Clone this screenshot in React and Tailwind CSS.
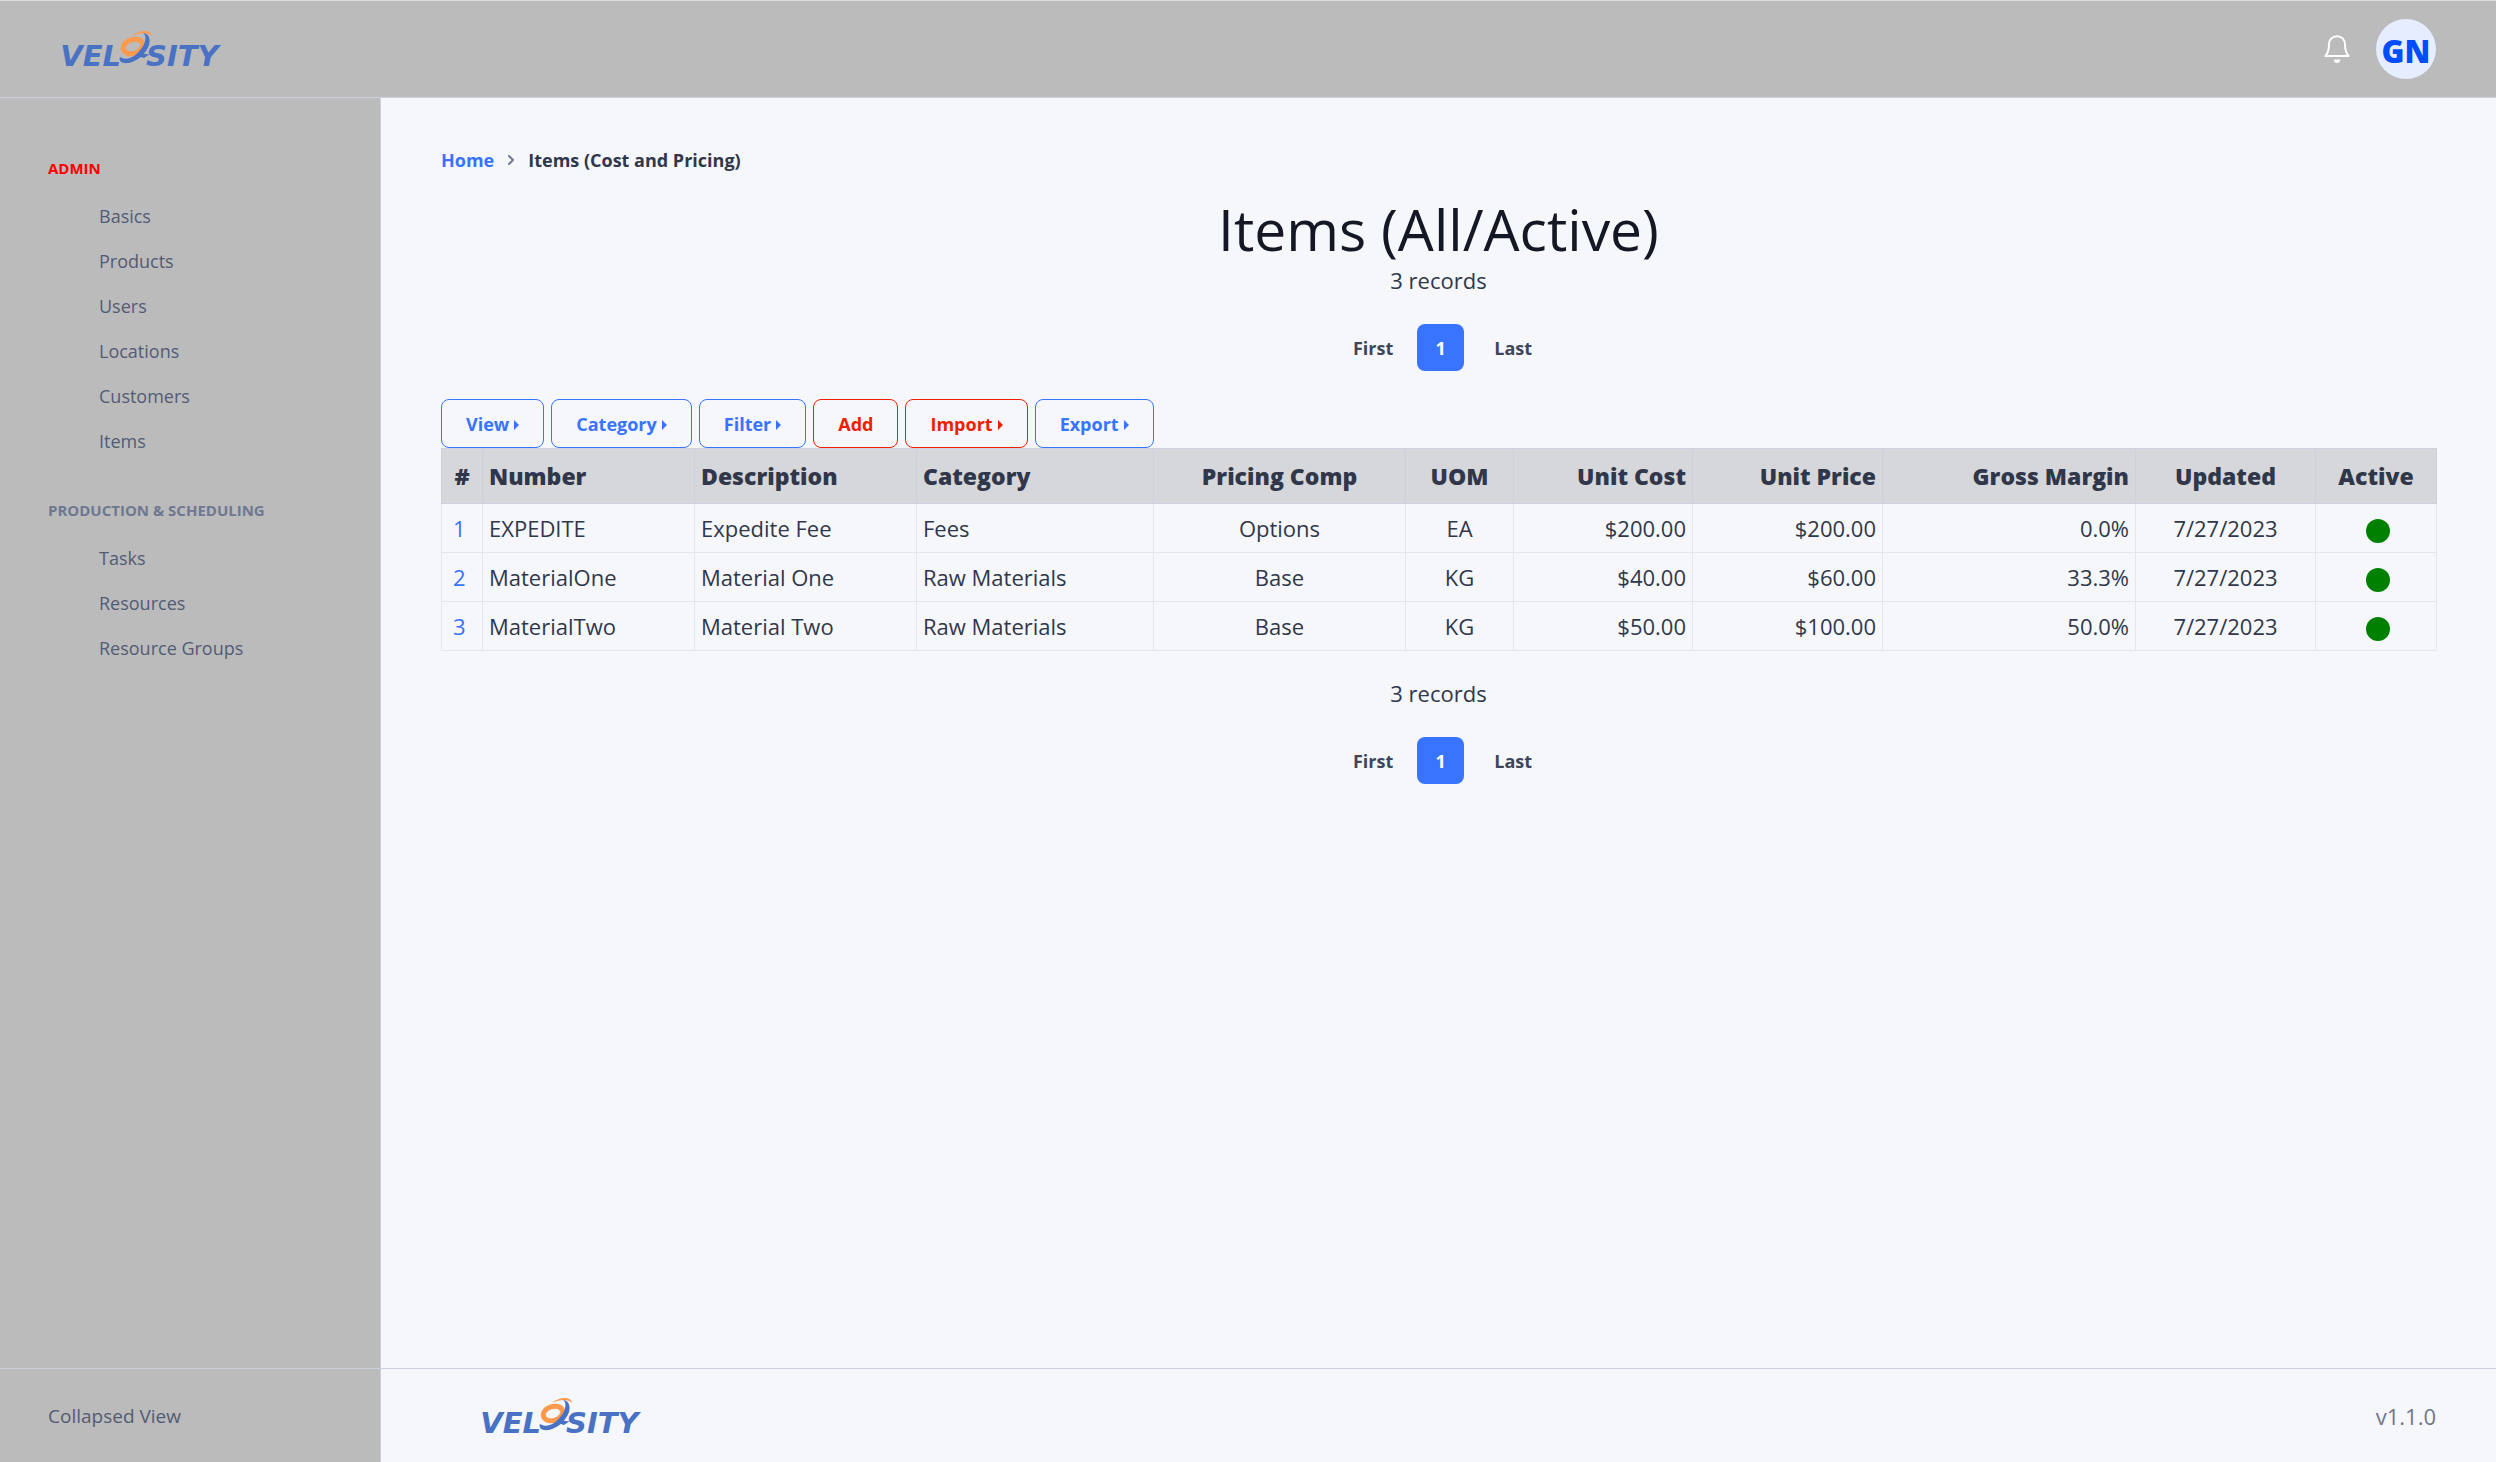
import { ChevronRight } from "lucide-react";

function Logo({ className }) {
  return (
    <svg viewBox="0 -6 188 50" className={className} role="img" aria-label="Velosity">
      <g fill="#4a72c4" fontFamily="DejaVu Sans, sans-serif" fontSize="29" fontWeight="700" fontStyle="italic">
        <text x="73" y="36" textAnchor="end">VEL</text>
        <text x="98" y="36">SITY</text>
      </g>
      <ellipse cx="85" cy="16.500" rx="10" ry="7" transform="rotate(-18 85 16.500)" fill="none" stroke="#ff9a4d" strokeWidth="5" />
      <path d="M95 3C99 5 98 13 93 19C86 28 79 31 72 27C70 32 76 35 84 32C92 29 98 23 101 15C103 8 100 3 95 3Z" fill="#4a72c4" />
      <path d="M93 22Q97 25 102 24L96 28L90 26Z" fill="#4a72c4" />
      <path d="M84 6C91 0 103 -1 104 6C100 2 92 2 84 6Z" fill="#ff9a4d" />
    </svg>
  );
}

function BellIcon({ className }) {
  return (
    <svg viewBox="0 0 26 29" className={className} fill="none" stroke="currentColor" strokeWidth="2" strokeLinecap="round" strokeLinejoin="round">
      <path d="M13 1.200C8 1.200 5 5 5 9.500C5 15 4 18 1.500 21H24.500C22 18 21 15 21 9.500C21 5 18 1.200 13 1.200Z" />
      <path d="M10.500 25.200Q11 27.200 13 27.200T15.500 25.200Z" fill="currentColor" strokeWidth="1.500" />
    </svg>
  );
}

const sections = [
  { title: "ADMIN", color: "text-[#ff0000]", items: ["Basics", "Products", "Users", "Locations", "Customers", "Items"] },
  { title: "PRODUCTION & SCHEDULING", color: "text-[#6e7891]", items: ["Tasks", "Resources", "Resource Groups"] },
];

const actions = [
  ["View", true, false],
  ["Category", true, false],
  ["Filter", true, false],
  ["Add", false, true],
  ["Import", true, true],
  ["Export", true, false],
];

const columns = [
  ["#", "w-[41px]", "text-center"],
  ["Number", "w-[212px]", "text-left"],
  ["Description", "w-[222px]", "text-left"],
  ["Category", "w-[237px]", "text-left"],
  ["Pricing Comp", "w-[252px]", "text-center"],
  ["UOM", "w-[108px]", "text-center"],
  ["Unit Cost", "w-[179px]", "text-right"],
  ["Unit Price", "w-[190px]", "text-right"],
  ["Gross Margin", "w-[253px]", "text-right"],
  ["Updated", "w-[180px]", "text-center"],
  ["Active", "w-[121px]", "text-center"],
];

const rows = [
  ["1", "EXPEDITE", "Expedite Fee", "Fees", "Options", "EA", "$200.00", "$200.00", "0.0%", "7/27/2023"],
  ["2", "MaterialOne", "Material One", "Raw Materials", "Base", "KG", "$40.00", "$60.00", "33.3%", "7/27/2023"],
  ["3", "MaterialTwo", "Material Two", "Raw Materials", "Base", "KG", "$50.00", "$100.00", "50.0%", "7/27/2023"],
];

function Pager() {
  return (
    <div className="flex flex-col items-center">
      <p className="text-[22px] leading-8">3 records</p>
      <nav aria-label="Pagination" className="mt-7 flex items-center text-lg font-bold text-[#3e465b]">
        <button className="px-6">First</button>
        <button className="size-[47px] rounded-lg bg-[#3874ff] text-white" aria-current="page">1</button>
        <button className="pr-4 pl-[30px]">Last</button>
      </nav>
    </div>
  );
}

export default function App() {
  return (
    <div className="flex min-h-screen flex-col bg-[#f5f7fb] font-['Open_Sans',sans-serif] text-[#31374a]">
      <header className="flex h-[98px] items-center justify-between border-t border-b border-t-[#dcdcdc] border-b-[#cbd0dd] bg-[#bbbbbb] pr-[60px] pl-12">
        <a href="#" className="block"><Logo className="w-[188px]" /></a>
        <div className="flex items-center gap-[26px]">
          <button aria-label="Notifications"><BellIcon className="h-[29px] w-[26px] text-white" /></button>
          <button className="size-[60px] rounded-full bg-[#e5edff] pt-1 text-[31px] font-extrabold text-[#004dff]">GN</button>
        </div>
      </header>
      <div className="flex flex-1">
        <aside className="flex w-[381px] shrink-0 flex-col border-r border-[#cbd0dd] bg-[#bbbbbb]">
          <nav className="flex-1 pt-14 pl-12">
            {sections.map((s) => (
              <section key={s.title} className="mb-8">
                <h2 className={`text-[15px] leading-7 font-bold ${s.color}`}>{s.title}</h2>
                <ul className="mt-3 pl-[51px] text-lg font-medium text-[#525b75]">
                  {s.items.map((i) => (
                    <li key={i} className="h-[45px] leading-[45px]"><a href="#">{i}</a></li>
                  ))}
                </ul>
              </section>
            ))}
          </nav>
          <button className="h-[94px] border-t border-[#cbd0dd] pt-0.5 pl-12 text-left text-[19px] font-medium text-[#525b75]">Collapsed View</button>
        </aside>
        <div className="flex min-w-0 flex-1 flex-col">
          <main className="flex-1 px-[60px] pt-12">
            <nav aria-label="Breadcrumb" className="flex h-7 items-center text-lg font-bold">
              <a href="#" className="text-[#3874ff]">Home</a>
              <ChevronRight className="mx-[9px] size-4 text-[#6e7891]" strokeWidth={3} />
              <span>Items (Cost and Pricing)</span>
            </nav>
            <h1 className="mt-5 text-center text-[57px] leading-[70px] text-[#141824]">Items (All/Active)</h1>
            <Pager />
            <div className="mt-7 flex gap-[7px]">
              {actions.map(([label, menu, red]) => (
                <button key={label} className={`flex h-[49px] items-center gap-[5px] rounded-lg border px-6 text-lg font-bold ${red ? "border-[#ed2000] text-[#ed2000]" : "border-[#3874ff] text-[#3874ff]"}`}>
                  {label}
                  {menu && <svg viewBox="0 0 5 10" className="mt-0.5 h-[10px] w-[5px] fill-current"><path d="M0 0L5 5L0 10Z" /></svg>}
                </button>
              ))}
            </div>
            <table className="w-full table-fixed border-collapse text-[22px]">
              <thead>
                <tr className="h-[55px] bg-[#d6d7da] text-[23px]">
                  {columns.map(([name, w, align]) => (
                    <th key={name} className={`border border-[#cbd0dd] px-1.5 font-extrabold whitespace-nowrap ${w} ${align}`}>{name}</th>
                  ))}
                </tr>
              </thead>
              <tbody>
                {rows.map((r) => (
                  <tr key={r[0]} className="h-[49px]">
                    {r.map((v, i) => (
                      <td key={i} className={`border border-[#e3e6ed] ${i === 0 ? "pl-[11px]" : "px-1.5"} ${i === 0 ? "text-left" : columns[i][2]}`}>
                        {i === 0 ? <a href="#" className="text-[#3874ff]">{v}</a> : v}
                      </td>
                    ))}
                    <td className="border border-[#e3e6ed] pt-1.5 pl-1">
                      <div role="img" aria-label="Active" className="mx-auto size-6 rounded-full bg-[#008000]" />
                    </td>
                  </tr>
                ))}
              </tbody>
            </table>
            <div className="mt-[26px]"><Pager /></div>
          </main>
          <footer className="flex h-[94px] items-center justify-between border-t border-[#cbd0dd] pr-[60px] pl-[87px]">
            <a href="#" className="block"><Logo className="w-[188px]" /></a>
            <span className="pt-0.5 text-[22px] text-[#6e7891]">v1.1.0</span>
          </footer>
        </div>
      </div>
    </div>
  );
}
